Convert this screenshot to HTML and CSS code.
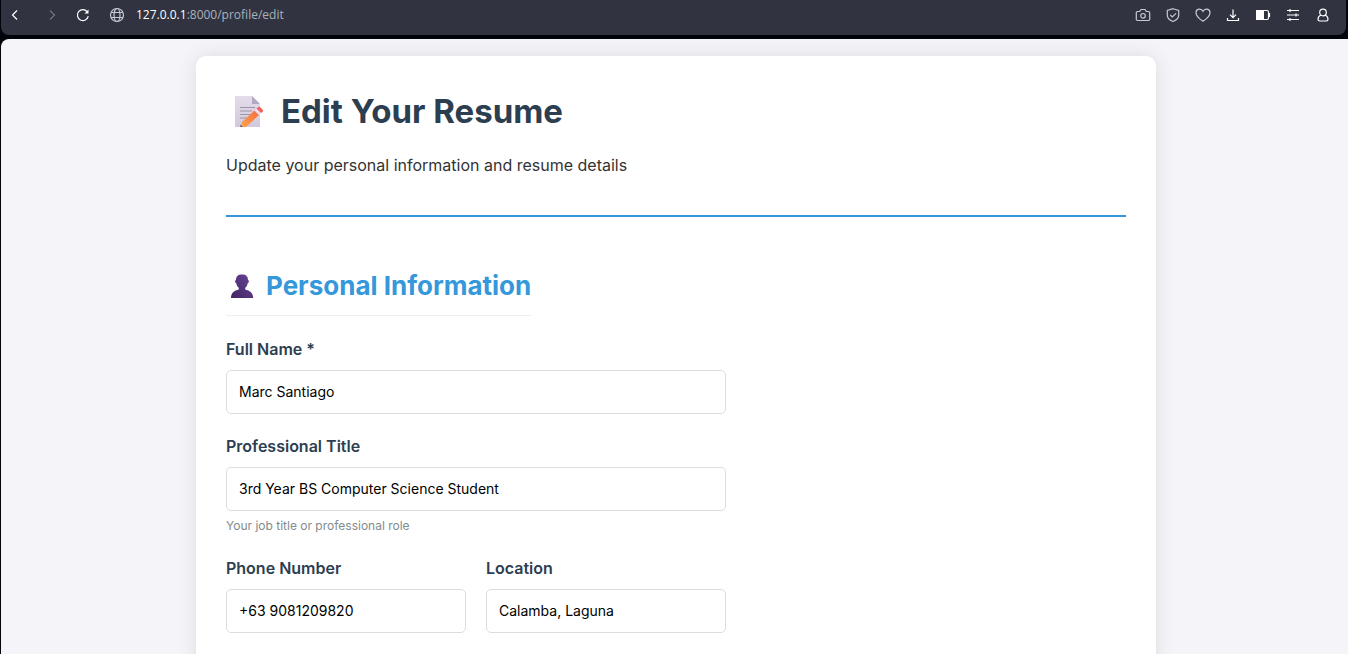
FILE: index.html
```html
<!DOCTYPE html>
<html lang="en">
<head>
<meta charset="utf-8">
<meta name="viewport" content="width=device-width, initial-scale=1">
<title>Edit Your Resume</title>
<link rel="stylesheet" href="styles.css">
</head>
<body>
<header class="toolbar">
  <div class="toolbar-nav">
    <button class="tool" type="button" aria-label="Back"><svg viewBox="0 0 16 16"><path d="M10 3.500 5.500 8l4.500 4.500"/></svg></button>
    <button class="tool tool-off" type="button" aria-label="Forward" disabled><svg viewBox="0 0 16 16"><path d="M9 3.500 13.500 8 9 12.500"/></svg></button>
    <button class="tool" type="button" aria-label="Reload"><svg viewBox="0 0 16 16"><path d="M13.300 9.200A5.500 5.500 0 1 1 12.500 5"/><path d="M13.500 2.500v4h-4z" fill="currentColor" stroke="none"/></svg></button>
  </div>
  <div class="address">
    <svg class="globe" viewBox="0 0 16 16"><circle cx="8" cy="8" r="6.500"/><ellipse cx="8" cy="8" rx="3" ry="6.500"/><path d="M2.300 5.500h11.400M2.300 10.500h11.400"/></svg>
    <span class="url"><span class="host">127.0.0.1</span>:8000/profile/edit</span>
  </div>
  <div class="toolbar-actions">
    <button class="tool tool-soft" type="button" aria-label="Snapshot"><svg viewBox="0 0 16 16"><path d="M2.500 4.500h2.200L6 2.500h4l1.300 2h2.200q1.200 0 1.200 1.200v6.600q0 1.200-1.200 1.200h-11q-1.200 0-1.200-1.200V5.700q0-1.200 1.200-1.200z"/><circle cx="8" cy="8.800" r="2.300"/></svg></button>
    <button class="tool tool-soft" type="button" aria-label="Protection"><svg viewBox="0 0 16 16"><path d="M8 1.700 13.700 3.500v4.700c0 3-2.300 5-5.700 6.300-3.400-1.300-5.700-3.300-5.700-6.300V3.500z"/><path d="m5.300 8 2 2 3.700-3.700"/></svg></button>
    <button class="tool tool-soft" type="button" aria-label="Favorites"><svg viewBox="0 0 16 16"><path d="M8 14.300C3.500 11.300 1 8.800 1 5.700 1 1.500 6.300.8 8 4.300 9.700.8 15 1.500 15 5.700c0 3.100-2.500 5.600-7 8.600z"/></svg></button>
    <button class="tool" type="button" aria-label="Downloads"><svg viewBox="0 0 16 16"><path d="M8 2.500v8M5 7.700l3 3 3-3M2.500 11v2.500h11V11"/></svg></button>
    <button class="tool" type="button" aria-label="Battery saver"><svg viewBox="0 0 16 16"><path d="M1 3h8v10H1z" fill="currentColor" stroke="none"/><path d="M9 3.500h3q1.500 0 1.500 1.500v6q0 1.500-1.500 1.500H9"/><path d="M14.500 6v4"/></svg></button>
    <button class="tool" type="button" aria-label="Easy setup"><svg viewBox="0 0 16 16"><path d="M2 3.500h12M2 8h12M2 12.500h12M5 2v3M11 6.500v3M5 11v3"/></svg></button>
    <button class="tool" type="button" aria-label="Profile"><svg viewBox="0 0 16 16"><circle cx="8" cy="5.500" r="3.300"/><path d="M5.800 8C3.800 9 3 10.600 3 12.300q0 1.700 1.700 1.700h6.600q1.700 0 1.700-1.700C13 10.600 12.200 9 10.200 8"/></svg></button>
  </div>
</header>

<main class="page">
  <form class="card">
    <div class="card-header">
      <h1 class="title">
        <svg class="title-icon" viewBox="0 0 44 44" aria-hidden="true">
          <defs>
            <linearGradient id="paper" x1="0" y1="0" x2="0" y2="1"><stop offset="0" stop-color="#e4dcea"/><stop offset="1" stop-color="#d2c9dc"/></linearGradient>
            <linearGradient id="pencil" x1="1" y1="0" x2="0" y2="1"><stop offset="0" stop-color="#f66b3d"/><stop offset="1" stop-color="#ffa64b"/></linearGradient>
          </defs>
          <path d="M9 6h17l8 8v23H9z" fill="url(#paper)"/>
          <path d="M26 6v8h8z" fill="#b5a8c2"/>
          <path d="M14 17.500h15M14 21h12M14 24.500h10M14 28h7" stroke="#9d94a8" stroke-width="1.200"/>
          <path d="m16 32 12.500-11.500 4.500 4.500L20 37h-5z" fill="url(#pencil)"/>
          <path d="m28.500 20.500 2-2 4.500 4.500-2 2z" fill="#e9deef"/>
          <path d="m30.500 18.500 2-1.500q1-.5 2 .5l2.200 2.300q1 1 0 2L35 23z" fill="#fa5d5b"/>
          <path d="m14.500 34.500 2 2.500h-2z" fill="#533553"/>
        </svg>
        <span>Edit Your Resume</span>
      </h1>
      <p class="subtitle">Update your personal information and resume details</p>
    </div>

    <section class="section">
      <h2 class="section-title">
        <svg class="section-icon" viewBox="0 0 32 32" aria-hidden="true">
          <defs><linearGradient id="bust" x1="1" y1="0" x2="0" y2="1"><stop offset="0" stop-color="#6a459b"/><stop offset="1" stop-color="#432461"/></linearGradient></defs>
          <path d="M16 4.500c4.300 0 6 2 6 5.500 1.200 0 1.200 3-.3 3.200-.4 2.300-1.200 3.600-2.500 4.600v1.700c4.500.8 8 3.600 8 8.500H5c0-4.900 3.300-7.700 7.800-8.500v-1.700c-1.300-1-2.100-2.300-2.500-4.600C8.800 13 8.800 10 10 10c0-3.500 1.700-5.500 6-5.500z" fill="url(#bust)"/>
        </svg>
        <span>Personal Information</span>
      </h2>

      <div class="fields">
        <div class="field">
          <label class="label" for="name">Full Name *</label>
          <input class="input" id="name" type="text" value="Marc Santiago" required>
        </div>
        <div class="field">
          <label class="label" for="job">Professional Title</label>
          <input class="input" id="job" type="text" value="3rd Year BS Computer Science Student" aria-describedby="job-hint">
          <small class="hint" id="job-hint">Your job title or professional role</small>
        </div>
        <div class="field-row">
          <div class="field">
            <label class="label" for="phone">Phone Number</label>
            <input class="input" id="phone" type="tel" value="+63 9081209820">
          </div>
          <div class="field">
            <label class="label" for="location">Location</label>
            <input class="input" id="location" type="text" value="Calamba, Laguna">
          </div>
        </div>
      </div>
    </section>
  </form>
</main>
</body>
</html>
```
FILE: styles.css
```css
* {
  box-sizing: border-box;
}

html {
  height: 100%;
}

body {
  display: flex;
  flex-direction: column;
  gap: 4px;
  height: 100%;
  margin: 0;
  overflow: hidden;
  background: #02040c;
  color: #333;
  font-family: Inter, "Open Sans", sans-serif;
  font-size: 16px;
}

.toolbar {
  display: flex;
  flex: none;
  align-items: center;
  height: 35px;
  margin: 0 2px 0 1px;
  padding: 0 15px 5px 6px;
  border-radius: 0 0 8px 8px;
  background: #313440;
  color: #fff;
}

.toolbar-nav {
  display: flex;
  gap: 18px;
}

.toolbar-actions {
  display: flex;
  gap: 14px;
}

.tool {
  display: block;
  width: 16px;
  height: 16px;
  padding: 0;
  border: 0;
  background: none;
  color: #fff;
}

.tool-soft {
  color: #c6cad2;
}

.tool-off {
  color: #70747f;
}

.tool svg,
.globe {
  display: block;
  width: 16px;
  height: 16px;
  fill: none;
  stroke: currentColor;
  stroke-width: 1.2;
}

.address {
  display: flex;
  flex: 1;
  align-items: center;
  gap: 11px;
  margin-left: 18px;
  color: #c6cad2;
}

.url {
  color: #a9b2bf;
  font-family: "Open Sans", "Noto Sans", sans-serif;
  font-size: 12px;
  line-height: 18px;
}

.host {
  color: #fff;
}

.page {
  flex: 1;
  min-height: 0;
  margin-left: 1px;
  padding: 17px 0 0 3px;
  overflow: hidden;
  border-radius: 8px 0 0 0;
  background: #f4f4f9;
}

.card {
  max-width: 960px;
  min-height: 100vh;
  margin: 0 auto;
  padding: 30px;
  border-radius: 10px;
  background: #fff;
  box-shadow: 0 0 20px rgba(0, 0, 0, 0.1);
}

.card-header {
  margin-bottom: 50px;
  padding-bottom: 37px;
  border-bottom: 2px solid #3498db;
}

.title {
  display: flex;
  align-items: center;
  gap: 11px;
  height: 51px;
  margin: 0 0 15px;
  color: #2c3e50;
  font-size: 33px;
  font-weight: 700;
  line-height: 51px;
}

.title-icon {
  width: 44px;
  height: 44px;
}

.subtitle {
  margin: 0;
  line-height: 26px;
}

.section-title {
  display: inline-flex;
  align-items: center;
  gap: 8px;
  margin: 0 0 21px;
  padding-bottom: 10px;
  border-bottom: 1px solid #eee;
  color: #3498db;
  font-size: 26px;
  font-weight: 700;
  line-height: 38px;
}

.section-icon {
  width: 32px;
  height: 32px;
}

.fields {
  display: flex;
  flex-direction: column;
  gap: 20px;
  max-width: 500px;
}

.field {
  display: flex;
  flex-direction: column;
}

.field-row {
  display: grid;
  grid-template-columns: 1fr 1fr;
  gap: 20px;
}

.label {
  margin-bottom: 9px;
  color: #2c3e50;
  font-size: 16px;
  font-weight: 600;
  line-height: 24px;
}

.input {
  width: 100%;
  height: 44px;
  padding: 0 12px 2px;
  border: 1px solid #ddd;
  border-radius: 5px;
  background: #fff;
  color: #000;
  font-family: inherit;
  font-size: 14px;
}

.hint {
  margin-top: 5px;
  color: #7f8c8d;
  font-size: 12px;
  line-height: 20px;
}
```
